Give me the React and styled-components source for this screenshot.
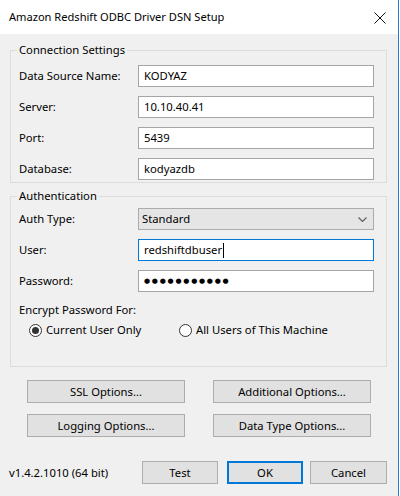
import styled, { createGlobalStyle } from "styled-components";

const GlobalStyle = createGlobalStyle`
  html, body {
    margin: 0;
    padding: 0;
    background: #fff;
  }
  body {
    font-family: "Segoe UI", "Noto Sans", "Open Sans", sans-serif;
    font-size: 11.25px;
    color: #000;
  }
  * {
    box-sizing: border-box;
  }
`;

const connectionFields = [
  { label: "Data Source Name:", value: "KODYAZ" },
  { label: "Server:", value: "10.10.40.41" },
  { label: "Port:", value: "5439" },
  { label: "Database:", value: "kodyazdb" },
];

const App = () => {
  return (
    <>
      <GlobalStyle />
      <Window>
        <TitleBar>
          <Title>Amazon Redshift ODBC Driver DSN Setup</Title>
          <CloseIcon viewBox="0 0 12 12">
            <path d="M0.5 0.5 L11.5 11.5 M11.5 0.5 L0.5 11.5" />
          </CloseIcon>
        </TitleBar>

        <Body>
          <Group>
            <Legend>Connection Settings</Legend>
            <FieldGrid>
              {connectionFields.map((f) => (
                <FieldRow key={f.label}>
                  <Label>{f.label}</Label>
                  <TextBox>{f.value}</TextBox>
                </FieldRow>
              ))}
            </FieldGrid>
          </Group>

          <Group $gap={5} $top={4} $bottom={28}>
            <Legend>Authentication</Legend>
            <FieldGrid>
              <FieldRow>
                <Label>Auth Type:</Label>
                <ComboBox>
                  <span>Standard</span>
                  <Chevron viewBox="0 0 9 5">
                    <path d="M0.5 0.5 L4.5 4.5 L8.5 0.5" />
                  </Chevron>
                </ComboBox>
              </FieldRow>
              <FieldRow>
                <Label>User:</Label>
                <TextBox $focused>
                  redshiftdbuser
                  <Caret />
                </TextBox>
              </FieldRow>
              <FieldRow>
                <Label>Password:</Label>
                <TextBox>
                  <Dots>●●●●●●●●●●●</Dots>
                </TextBox>
              </FieldRow>
            </FieldGrid>

            <EncryptLabel>Encrypt Password For:</EncryptLabel>
            <RadioRow>
              <RadioOption>
                <Radio $checked />
                Current User Only
              </RadioOption>
              <RadioOption>
                <Radio />
                All Users of This Machine
              </RadioOption>
            </RadioRow>
          </Group>

          <OptionsGrid>
            <Button>SSL Options...</Button>
            <Button>Additional Options...</Button>
            <Button>Logging Options...</Button>
            <Button>Data Type Options...</Button>
          </OptionsGrid>

          <Footer>
            <Version>v1.4.2.1010 (64 bit)</Version>
            <Button $w={76}>Test</Button>
            <Button $w={76} $default $ml={9}>
              OK
            </Button>
            <Button $w={77} $ml={7}>
              Cancel
            </Button>
          </Footer>
        </Body>
      </Window>
    </>
  );
};

const Window = styled.div`
  width: 399px;
  height: 496px;
  display: flex;
  flex-direction: column;
  border-right: 1px solid #1a7fd4;
  background: #f0f0f0;
`;

const TitleBar = styled.div`
  height: 34px;
  flex: none;
  background: #fff;
  display: flex;
  align-items: center;
  justify-content: space-between;
  padding: 0 12px 0 9px;
`;

const Title = styled.span`
  font-size: 11.1px;
  line-height: 16px;
  color: #000;
`;

const CloseIcon = styled.svg`
  width: 12px;
  height: 12px;
  margin-top: 1px;
  fill: none;
  stroke: #111;
  stroke-width: 1;
`;

const Body = styled.div`
  flex: 1;
  display: flex;
  flex-direction: column;
  padding: 8px 11px 0 10px;
`;

const Group = styled.fieldset`
  margin: ${(p) => p.$gap || 0}px 0 0 0;
  border: 1px solid #dcdcdc;
  padding: ${(p) => p.$top ?? 7}px 12px ${(p) => p.$bottom ?? 2}px 8px;
  min-width: 0;
`;

const Legend = styled.legend`
  padding: 0 2px;
  margin-left: -2px;
  line-height: 16px;
`;

const FieldGrid = styled.div`
  display: flex;
  flex-direction: column;
  gap: 9px;
`;

const FieldRow = styled.div`
  display: grid;
  grid-template-columns: 119px 236px;
  align-items: center;
`;

const Label = styled.span`
  line-height: 16px;
`;

const TextBox = styled.div`
  height: 22px;
  background: #fff;
  border: 1px solid ${(p) => (p.$focused ? "#0078d7" : "#a5a5a5")};
  padding: 0 5px;
  display: flex;
  align-items: center;
  line-height: 16px;
  white-space: nowrap;
`;

const Caret = styled.span`
  display: inline-block;
  width: 1px;
  height: 15px;
  background: #000;
  margin-left: 1px;
`;

const Dots = styled.span`
  font-family: "DejaVu Sans", sans-serif;
  font-size: 7px;
  letter-spacing: 1.75px;
  line-height: 16px;
`;

const ComboBox = styled.div`
  height: 22px;
  background: #e5e5e5;
  border: 1px solid #acacac;
  padding: 0 6px 0 3px;
  display: flex;
  align-items: center;
  justify-content: space-between;
  line-height: 16px;
`;

const Chevron = styled.svg`
  width: 9px;
  height: 5px;
  fill: none;
  stroke: #606060;
  stroke-width: 1.2;
`;

const EncryptLabel = styled.div`
  margin-top: 10px;
  line-height: 16px;
`;

const RadioRow = styled.div`
  display: grid;
  grid-template-columns: 150px auto;
  margin: 4px 0 0 10px;
`;

const RadioOption = styled.label`
  display: flex;
  align-items: center;
  gap: 4px;
  line-height: 16px;
`;

const Radio = styled.span`
  width: 13px;
  height: 13px;
  flex: none;
  border-radius: 50%;
  border: 1px solid #333;
  background: #fff;
  position: relative;

  &::after {
    content: "";
    display: ${(p) => (p.$checked ? "block" : "none")};
    position: absolute;
    left: 2px;
    top: 2px;
    width: 7px;
    height: 7px;
    border-radius: 50%;
    background: #333;
  }
`;

const OptionsGrid = styled.div`
  display: grid;
  grid-template-columns: 158px 158px;
  column-gap: 28px;
  row-gap: 11px;
  margin: 13px 0 0 17px;
`;

const Button = styled.button`
  font-family: inherit;
  font-size: 11.25px;
  color: #000;
  height: 23px;
  width: ${(p) => (p.$w ? `${p.$w}px` : "auto")};
  margin-left: ${(p) => p.$ml || 0}px;
  padding: 0;
  background: #e1e1e1;
  border: ${(p) => (p.$default ? "2px solid #0078d7" : "1px solid #adadad")};
  line-height: 16px;
`;

const Footer = styled.div`
  display: flex;
  align-items: center;
  margin: 24px 0 0 -1px;
`;

const Version = styled.span`
  width: 133px;
  line-height: 16px;
`;

export default App;
